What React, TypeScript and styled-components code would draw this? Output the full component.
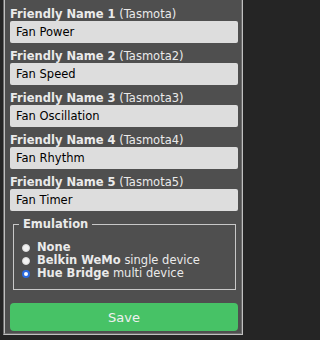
import styled, { createGlobalStyle } from 'styled-components';

const GlobalStyle = createGlobalStyle`
  html, body {
    margin: 0;
    padding: 0;
    background: #252525;
  }
  body {
    font-family: "DejaVu Sans", Verdana, sans-serif;
    font-size: 11.5px;
    color: #eaeaea;
  }
`;

const Page = styled.div`
  padding-left: 3px;
  width: 240px;
`;

const Panel = styled.div`
  background: #4f4f4f;
  border: 2px groove #c0c0c0;
  border-top: none;
  padding: 1px 3px 2px 5px;
`;

const Field = styled.div`
  display: flex;
  flex-direction: column;
`;

const Label = styled.label`
  display: block;
  padding-top: 6px;
  line-height: 14px;
  white-space: nowrap;
`;

const Strong = styled.b`
  font-weight: bold;
`;

const TextInput = styled.input`
  box-sizing: border-box;
  width: 100%;
  height: 22px;
  margin: 0;
  padding: 0 6px;
  border: none;
  border-radius: 2px;
  background: #dddddd;
  color: #000;
  font-family: "DejaVu Sans", Verdana, sans-serif;
  font-size: 11.5px;
  outline: none;
`;

const Fieldset = styled.fieldset`
  margin: 6px 2px 0 3px;
  padding: 0 5px 9px 5px;
  border: 1px solid #c8c8c8;
  min-width: 0;
`;

const Legend = styled.legend`
  padding: 0 4px;
  font-weight: bold;
  line-height: 14px;
`;

const RadioList = styled.div`
  display: flex;
  flex-direction: column;
  padding-top: 10px;
`;

const RadioRow = styled.label`
  display: flex;
  align-items: center;
  gap: 7px;
  line-height: 13px;
  height: 13px;
  padding-left: 3px;
  white-space: nowrap;
`;

const Radio = styled.input`
  appearance: none;
  box-sizing: border-box;
  margin: 0;
  width: 8px;
  height: 8px;
  border-radius: 50%;
  background: #f2f2f2;
  border: 1px solid #dadada;
  flex: none;

  &:checked {
    background: #fff;
    border: 2px solid #2a6ae0;
  }
`;

const Muted = styled.span`
  font-weight: normal;
`;

const SaveButton = styled.button`
  display: block;
  width: 100%;
  height: 28px;
  margin-top: 13px;
  border: none;
  border-radius: 4px;
  background: #47c266;
  color: #f0f0f0;
  font-family: "DejaVu Sans", Verdana, sans-serif;
  font-size: 13px;
  cursor: pointer;
`;

const names = ['Fan Power', 'Fan Speed', 'Fan Oscillation', 'Fan Rhythm', 'Fan Timer'];

export default function App() {
  return (
    <>
      <GlobalStyle />
      <Page>
        <Panel>
          {names.map((name, i) => (
            <Field key={i}>
              <Label>
                <Strong>Friendly Name {i + 1}</Strong> (Tasmota{i === 0 ? '' : i + 1})
              </Label>
              <TextInput defaultValue={name} />
            </Field>
          ))}
          <Fieldset>
            <Legend>Emulation</Legend>
            <RadioList>
              <RadioRow>
                <Radio type="radio" name="emu" />
                <Strong>None</Strong>
              </RadioRow>
              <RadioRow>
                <Radio type="radio" name="emu" />
                <span>
                  <Strong>Belkin WeMo</Strong> <Muted>single device</Muted>
                </span>
              </RadioRow>
              <RadioRow>
                <Radio type="radio" name="emu" defaultChecked />
                <span>
                  <Strong>Hue Bridge</Strong> <Muted>multi device</Muted>
                </span>
              </RadioRow>
            </RadioList>
          </Fieldset>
          <SaveButton>Save</SaveButton>
        </Panel>
      </Page>
    </>
  );
}
